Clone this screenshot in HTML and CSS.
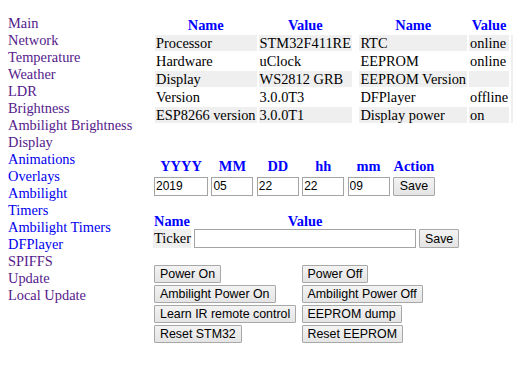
FILE: index.html
```html
<!DOCTYPE html>
<html>
<head>
	<meta charset="UTF-8">
	<title>uClock</title>
	<link rel="stylesheet" href="styles.css">
</head>
<body>
	<div class="page">
		<nav class="menu">
			<a class="visited" href="#">Main</a>
			<a class="visited" href="#">Network</a>
			<a class="visited" href="#">Temperature</a>
			<a class="visited" href="#">Weather</a>
			<a class="visited" href="#">LDR</a>
			<a class="visited" href="#">Brightness</a>
			<a class="visited" href="#">Ambilight Brightness</a>
			<a class="visited" href="#">Display</a>
			<a href="#">Animations</a>
			<a href="#">Overlays</a>
			<a href="#">Ambilight</a>
			<a href="#">Timers</a>
			<a href="#">Ambilight Timers</a>
			<a href="#">DFPlayer</a>
			<a class="visited" href="#">SPIFFS</a>
			<a class="visited" href="#">Update</a>
			<a class="visited" href="#">Local Update</a>
		</nav>
		<main class="content">
			<div class="info">
				<table class="status">
					<tr><th>Name</th><th>Value</th></tr>
					<tr class="odd"><td>Processor</td><td>STM32F411RE</td></tr>
					<tr><td>Hardware</td><td>uClock</td></tr>
					<tr class="odd"><td>Display</td><td>WS2812 GRB</td></tr>
					<tr><td>Version</td><td>3.0.0T3</td></tr>
					<tr class="odd"><td>ESP8266 version</td><td>3.0.0T1</td></tr>
				</table>
				<table class="status">
					<tr><th>Name</th><th>Value</th></tr>
					<tr class="odd"><td>RTC</td><td>online</td><td class="edge" rowspan="5"></td></tr>
					<tr><td>EEPROM</td><td>online</td></tr>
					<tr class="odd"><td>EEPROM Version</td><td></td></tr>
					<tr><td>DFPlayer</td><td>offline</td></tr>
					<tr class="odd"><td>Display power</td><td>on</td></tr>
				</table>
			</div>

			<form class="clock">
				<span class="label">YYYY</span>
				<span class="label">MM</span>
				<span class="label">DD</span>
				<span class="label">hh</span>
				<span class="label">mm</span>
				<span class="label">Action</span>
				<input type="text" value="2019">
				<input type="text" value="05">
				<input type="text" value="22">
				<input type="text" value="22">
				<input type="text" value="09">
				<button type="button">Save</button>
			</form>

			<form class="ticker">
				<span class="label">Name</span>
				<span class="label">Value</span>
				<span></span>
				<span class="name">Ticker</span>
				<input type="text" value="">
				<button type="button">Save</button>
			</form>

			<div class="actions">
				<button type="button">Power On</button>
				<button type="button">Power Off</button>
				<button type="button">Ambilight Power On</button>
				<button type="button">Ambilight Power Off</button>
				<button type="button">Learn IR remote control</button>
				<button type="button">EEPROM dump</button>
				<button type="button">Reset STM32</button>
				<button type="button">Reset EEPROM</button>
			</div>
		</main>
	</div>
</body>
</html>
```

FILE: styles.css
```css
body {
	margin: 0;
	padding: 15px 0 0;
	font-family: "Liberation Serif", "Times New Roman", serif;
	font-size: 14.4px;
	color: #000;
	background: #fff;
}
.page {
	display: flex;
	align-items: flex-start;
}
.menu {
	width: 145px;
	padding-left: 8px;
	flex: none;
}
.menu a {
	display: block;
	line-height: 17px;
	color: #0000ee;
	text-decoration: none;
}
.menu a.visited {
	color: #551a8b;
}
.content {
	flex: 1;
}
.info {
	display: flex;
	gap: 3.4px;
	align-items: flex-start;
}
.status {
	border-spacing: 2px;
	line-height: 14px;
}
.status th,
.status td {
	padding: 1px;
	white-space: nowrap;
}
.status th {
	color: #0000ff;
	font-weight: bold;
	text-align: center;
}
.status td {
	text-align: left;
}
.status tr.odd td,
.status td.edge {
	background: #efefef;
}
.label {
	color: #0000ff;
	font-weight: bold;
	text-align: center;
	line-height: 14px;
	padding: 1px 0;
}
input,
button {
	box-sizing: border-box;
	margin: 0;
	font-family: "Liberation Sans", Arial, sans-serif;
	color: #000;
}
input {
	height: 19px;
	padding: 0 1px;
	border: 1px solid #a4a4a4;
	font-size: 12px;
	background: #fff;
}
button {
	height: 18px;
	padding: 0 5px;
	border: 1px solid #a8a8a8;
	border-radius: 1px;
	font-size: 12.4px;
	line-height: 14px;
	background: linear-gradient(#f3f3f3, #e4e4e4);
	white-space: nowrap;
}
.clock {
	display: grid;
	grid-template-columns: 54px 42px 42px 42px 42px 42px;
	column-gap: 3.4px;
	row-gap: 3px;
	margin: 32.7px 0 0 1px;
}
.clock button {
	height: 19px;
	padding: 0;
}
.ticker {
	display: grid;
	grid-template-columns: 38px 222px auto;
	column-gap: 3px;
	justify-content: start;
	align-items: center;
	margin-top: 17.5px;
}
.ticker button {
	height: 19px;
}
.ticker .name {
	background: #efefef;
	line-height: 19px;
	padding-left: 1px;
}
.actions {
	display: grid;
	grid-template-columns: 147.5px auto;
	justify-content: start;
	justify-items: start;
	row-gap: 2px;
	margin: 17px 0 0 1px;
}
```
